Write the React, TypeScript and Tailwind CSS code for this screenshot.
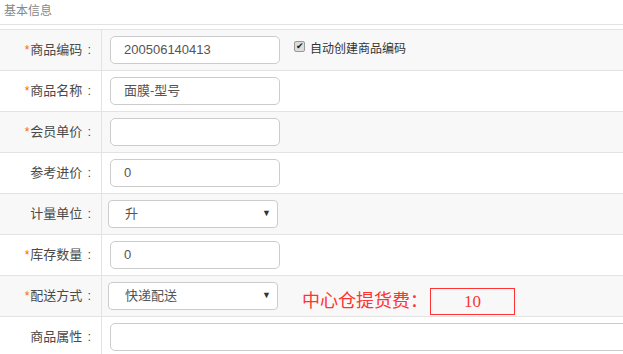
import React from "react";

const cjk = { fontFamily: '"Liberation Sans", "Noto Sans CJK SC", sans-serif' };

interface RowProps {
  label: string;
  required?: boolean;
  gray?: boolean;
  children?: React.ReactNode;
}

const Row = ({ label, required, gray, children }: RowProps) => {
  return (
    <div className={`flex h-[41px] border-b border-[#e3e3e3] ${gray ? "bg-[#f8f8f8]" : "bg-white"}`}>
      <div className="w-[102px] shrink-0 border-r border-[#e3e3e3] flex items-center justify-end pr-[10px] text-[13px] text-[#4a4a4a]">
        {required && <span className="text-[#f60] text-[12px] mr-[1px]">*</span>}
        <span>{label}</span>
        <span className="ml-[5px]">:</span>
      </div>
      <div className="flex-1 flex items-center pl-[8px] min-w-0">{children}</div>
    </div>
  );
};

const Input = ({ value, wide }: { value?: string; wide?: boolean }) => (
  <div
    className={`h-[28px] ${wide ? "w-[520px]" : "w-[170px]"} shrink-0 rounded-[5px] border border-[#cccccc] bg-white flex items-center pl-[13px] text-[13px] text-[#555]`}
  >
    {value}
  </div>
);

const Select = ({ value }: { value: string }) => (
  <div className="h-[28px] w-[170px] -ml-[2px] shrink-0 rounded-[4px] border border-[#cccccc] bg-white flex items-center pl-[16px] pr-[6px] text-[13px] text-[#555]">
    <span className="flex-1">{value}</span>
    <span className="text-[9px] text-[#333]">▼</span>
  </div>
);

export default function App() {
  return (
    <div className="w-[623px] h-[354px] overflow-hidden bg-white" style={cjk}>
      <div className="h-[25px] border-b border-[#e3e3e3] pl-[4px] pt-[2px] text-[12px] text-[#888]">基本信息</div>
      <div className="h-[4px]" />
      <div className="border-t border-[#e3e3e3]">
        <Row label="商品编码" required gray>
          <Input value="200506140413" />
          <div className="flex items-center ml-[14px] -mt-[3px] text-[12px] text-[#333]">
            <span className="w-[11px] h-[11px] -mt-[5px] rounded-[2px] border border-[#999] bg-[#ddd] flex items-center justify-center text-[9px] leading-none text-[#222] mr-[5px]">
              ✔
            </span>
            自动创建商品编码
          </div>
        </Row>
        <Row label="商品名称" required>
          <Input value="面膜-型号" />
        </Row>
        <Row label="会员单价" required gray>
          <Input />
        </Row>
        <Row label="参考进价">
          <Input value="0" />
        </Row>
        <Row label="计量单位" gray>
          <Select value="升" />
        </Row>
        <Row label="库存数量" required>
          <Input value="0" />
        </Row>
        <Row label="配送方式" required gray>
          <Select value="快递配送" />
          <span className="ml-[24px] mt-[10px] text-[18px] text-[#f33]">中心仓提货费：</span>
          <div
            className="ml-[2px] mt-[10px] h-[27px] w-[85px] border border-[#f33] flex items-end justify-center text-[17px] text-[#f33] leading-[24px]"
            style={{ fontFamily: '"Liberation Serif", serif' }}
          >
            10
          </div>
        </Row>
        <Row label="商品属性">
          <Input wide />
        </Row>
      </div>
    </div>
  );
}
